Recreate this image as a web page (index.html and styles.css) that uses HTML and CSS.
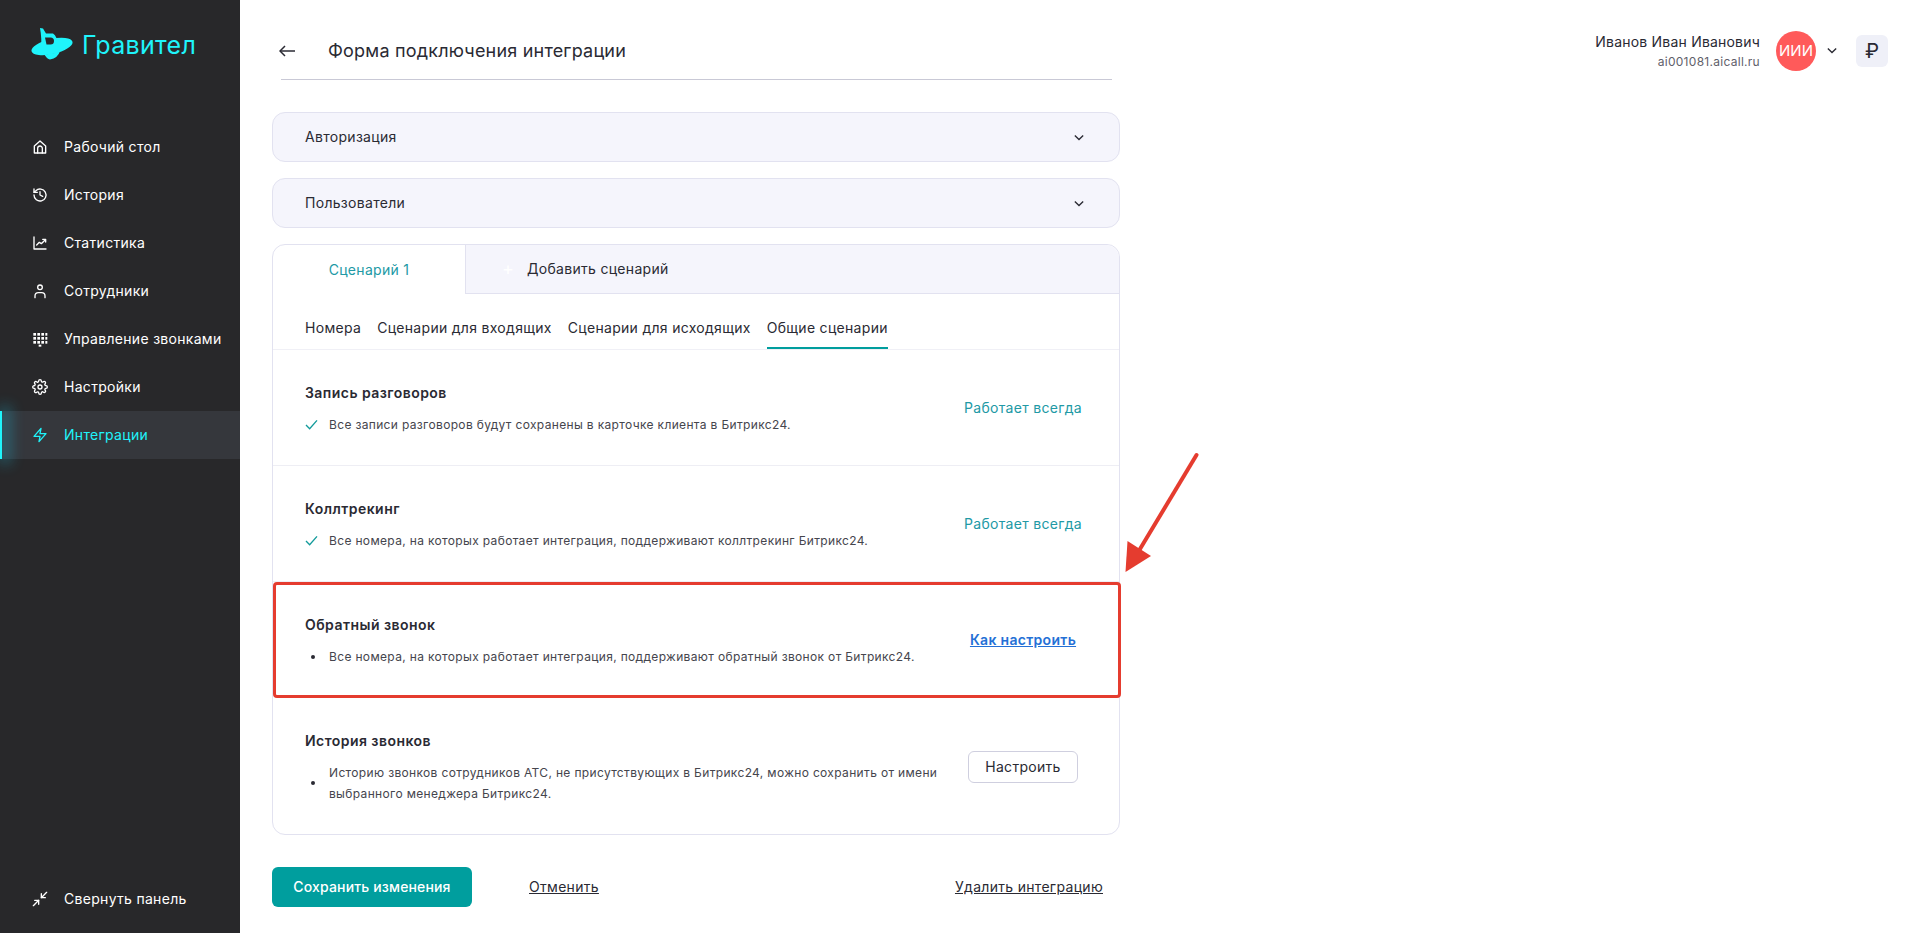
FILE: index.html

```html
<!DOCTYPE html>
<html lang="ru">
<head>
  <meta charset="UTF-8">
  <title>Форма подключения интеграции</title>
  <link rel="stylesheet" href="styles.css">
</head>
<body>
<div class="page">
  <aside class="sidebar">
    <div class="logo">
      <svg class="logo-mark" viewBox="30 25 44 35" width="44" height="35">
        <ellipse cx="52" cy="45.500" rx="21" ry="7.500" transform="rotate(-13 52 45.500)" fill="#1ff4fb"/>
        <path d="M40 27 L43 27.500 L46 32.500 L53 32.500 Q57.500 35 57 44 L41 47 Q42 38 40 27 Z" fill="#1ff4fb"/>
        <path d="M45 36.500 H50.500 a3.500 3.500 0 0 1 0 7 H46.500 Z" fill="#28282a"/>
        <path d="M44 53 Q52 54 60 50 Q58 57 50 58.500 Q47 58 44 53 Z" fill="#1ff4fb"/>
      </svg>
      <span class="logo-text">Гравител</span>
    </div>
    <nav class="nav">
      <a class="nav-item">
        <svg class="icon" viewBox="0 0 24 24"><path d="M3.5 10.5 12 3l8.5 7.5V21h-17z"/><path d="M8.5 21v-7a3.5 3.5 0 0 1 7 0v7"/></svg>
        <span>Рабочий стол</span>
      </a>
      <a class="nav-item">
        <svg class="icon" viewBox="0 0 24 24"><path d="M3 12a9 9 0 1 0 2.8-6.5L3 8"/><path d="M3 3v5h5"/><path d="M12 7v5l4 2"/></svg>
        <span>История</span>
      </a>
      <a class="nav-item">
        <svg class="icon" viewBox="0 0 24 24"><path d="M3 3v18h18"/><path d="M7 15l4-4 3 2 6-6"/><path d="M16 6.5h4.500v4"/></svg>
        <span>Статистика</span>
      </a>
      <a class="nav-item">
        <svg class="icon" viewBox="0 0 24 24"><circle cx="12" cy="6.500" r="3.500"/><path d="M4.500 22v-2.500a5 5 0 0 1 5-5h5a5 5 0 0 1 5 5V22"/></svg>
        <span>Сотрудники</span>
      </a>
      <a class="nav-item">
        <svg class="icon icon-fill" viewBox="0 0 24 24">
          <rect x="2" y="3" width="4" height="4"/><rect x="8" y="3" width="4" height="4"/><rect x="14" y="3" width="4" height="4"/><rect x="20" y="3" width="3" height="4"/>
          <rect x="2" y="9" width="4" height="4"/><rect x="8" y="9" width="4" height="4"/><rect x="14" y="9" width="4" height="4"/><rect x="20" y="9" width="3" height="4"/>
          <rect x="2" y="15" width="4" height="4"/><rect x="8" y="15" width="4" height="4"/><rect x="14" y="15" width="4" height="4"/><rect x="20" y="15" width="3" height="4"/>
          <rect x="10" y="20.500" width="4" height="3"/>
        </svg>
        <span>Управление звонками</span>
      </a>
      <a class="nav-item">
        <svg class="icon" viewBox="0 0 24 24"><circle cx="12" cy="12" r="3"/><path d="M19.4 15a1.65 1.65 0 0 0 .33 1.82l.06.06a2 2 0 0 1 0 2.83 2 2 0 0 1-2.83 0l-.06-.06a1.65 1.65 0 0 0-1.82-.33 1.65 1.65 0 0 0-1 1.51V21a2 2 0 0 1-2 2 2 2 0 0 1-2-2v-.09A1.65 1.65 0 0 0 9 19.4a1.65 1.65 0 0 0-1.82.33l-.06.06a2 2 0 0 1-2.83 0 2 2 0 0 1 0-2.83l.06-.06a1.65 1.65 0 0 0 .33-1.82 1.65 1.65 0 0 0-1.51-1H3a2 2 0 0 1-2-2 2 2 0 0 1 2-2h.09A1.65 1.65 0 0 0 4.6 9a1.65 1.65 0 0 0-.33-1.82l-.06-.06a2 2 0 0 1 0-2.83 2 2 0 0 1 2.83 0l.06.06a1.65 1.65 0 0 0 1.82.33H9a1.65 1.65 0 0 0 1-1.51V3a2 2 0 0 1 2-2 2 2 0 0 1 2 2v.09a1.65 1.65 0 0 0 1 1.51 1.65 1.65 0 0 0 1.82-.33l.06-.06a2 2 0 0 1 2.83 0 2 2 0 0 1 0 2.83l-.06.06a1.65 1.65 0 0 0-.33 1.82V9a1.65 1.65 0 0 0 1.51 1H21a2 2 0 0 1 2 2 2 2 0 0 1-2 2h-.09a1.65 1.65 0 0 0-1.51 1z"/></svg>
        <span>Настройки</span>
      </a>
      <a class="nav-item active">
        <svg class="icon" viewBox="0 0 24 24"><path d="M13.500 2 3 14h9l-1.500 8L21 10h-9l1.500-8z"/></svg>
        <span>Интеграции</span>
      </a>
    </nav>
    <a class="nav-item collapse">
      <svg class="icon" viewBox="0 0 24 24"><path d="M22 2l-8 8"/><path d="M14 4v6h6"/><path d="M2 22l8-8"/><path d="M4 14h6v6"/></svg>
      <span>Свернуть панель</span>
    </a>
  </aside>

  <main class="main">
    <div class="content">
      <header class="form-head">
        <svg class="back" viewBox="0 0 16 12" width="16" height="12"><path d="M16 6H1"/><path d="M6 1 1 6l5 5"/></svg>
        <h1>Форма подключения интеграции</h1>
      </header>

      <div class="accordion">
        <span>Авторизация</span>
        <svg class="chevron" viewBox="0 0 12 8" width="10" height="7"><path d="M1 1.500 6 6.500l5-5"/></svg>
      </div>
      <div class="accordion">
        <span>Пользователи</span>
        <svg class="chevron" viewBox="0 0 12 8" width="10" height="7"><path d="M1 1.500 6 6.500l5-5"/></svg>
      </div>

      <section class="card">
        <div class="tabs">
          <div class="tab tab-current">Сценарий 1</div>
          <div class="tab tab-add"><span class="plus">+</span>Добавить сценарий</div>
        </div>
        <div class="subtabs">
          <a>Номера</a>
          <a>Сценарии для входящих</a>
          <a>Сценарии для исходящих</a>
          <a class="current">Общие сценарии</a>
        </div>

        <div class="row">
          <div class="row-text">
            <h3>Запись разговоров</h3>
            <div class="desc">
              <svg class="check" viewBox="0 0 14 12" width="13" height="11"><path d="M1 6.500 5 10.500 13 1.500"/></svg>
              <p>Все записи разговоров будут сохранены в карточке клиента в Битрикс24.</p>
            </div>
          </div>
          <div class="row-side always">Работает всегда</div>
        </div>

        <div class="row">
          <div class="row-text">
            <h3>Коллтрекинг</h3>
            <div class="desc">
              <svg class="check" viewBox="0 0 14 12" width="13" height="11"><path d="M1 6.500 5 10.500 13 1.500"/></svg>
              <p>Все номера, на которых работает интеграция, поддерживают коллтрекинг Битрикс24.</p>
            </div>
          </div>
          <div class="row-side always">Работает всегда</div>
        </div>

        <div class="row row-marked">
          <div class="row-text">
            <h3>Обратный звонок</h3>
            <div class="desc">
              <span class="bullet"></span>
              <p>Все номера, на которых работает интеграция, поддерживают обратный звонок от Битрикс24.</p>
            </div>
          </div>
          <div class="row-side"><a class="how">Как настроить</a></div>
        </div>

        <div class="row row-last">
          <div class="row-text">
            <h3>История звонков</h3>
            <div class="desc">
              <span class="bullet"></span>
              <p>Историю звонков сотрудников АТС, не присутствующих в Битрикс24, можно сохранить от имени выбранного менеджера Битрикс24.</p>
            </div>
          </div>
          <div class="row-side"><button class="btn-outline">Настроить</button></div>
        </div>
      </section>

      <div class="actions">
        <button class="btn-save">Сохранить изменения</button>
        <a class="link cancel">Отменить</a>
        <a class="link remove">Удалить интеграцию</a>
      </div>
    </div>

    <div class="user">
      <div class="user-text">
        <div class="user-name">Иванов Иван Иванович</div>
        <div class="user-host">ai001081.aicall.ru</div>
      </div>
      <div class="avatar">ИИИ</div>
      <svg class="chevron user-chevron" viewBox="0 0 12 8" width="10" height="7"><path d="M1 1.500 6 6.500l5-5"/></svg>
      <div class="currency">₽</div>
    </div>
  </main>
</div>

<svg class="pointer" viewBox="0 0 85 130" width="85" height="130">
  <path d="M76.500 4 L14 108" class="pointer-line"/>
  <path d="M5.500 121 L7.500 90 L31 105 Z" class="pointer-head"/>
</svg>
</body>
</html>
```

FILE: styles.css

```css
* {
  box-sizing: border-box;
}

body {
  margin: 0;
  font-family: Inter, "Noto Sans", sans-serif;
  font-size: 14px;
  line-height: 20px;
  letter-spacing: 0.3px;
  color: #2a2a33;
  background: #fff;
}

.page {
  display: flex;
  height: 933px;
  overflow: hidden;
}

/* sidebar */
.sidebar {
  width: 240px;
  flex-shrink: 0;
  display: flex;
  flex-direction: column;
  background: #28282a;
  color: #fff;
}

.logo {
  height: 123px;
  padding: 26px 0 0 30px;
  display: flex;
  align-items: flex-start;
  gap: 8px;
}

.logo-text {
  font-size: 25px;
  line-height: 38px;
  color: #1ff4fb;
}

.nav-item {
  height: 48px;
  padding-left: 32px;
  display: flex;
  align-items: center;
  gap: 16px;
}

.nav-item.active {
  position: relative;
  background: #35373c;
  color: #1ff4fb;
}

.nav-item.active::before {
  content: "";
  position: absolute;
  left: 0;
  top: 0;
  bottom: 0;
  width: 2px;
  background: #1ff4fb;
  box-shadow: 4px 0 14px 5px rgba(31, 200, 235, 0.32);
}

.collapse {
  margin-top: auto;
  margin-bottom: 10px;
}

.icon {
  width: 16px;
  height: 16px;
  flex-shrink: 0;
  fill: none;
  stroke: currentColor;
  stroke-width: 2;
  stroke-linecap: round;
  stroke-linejoin: round;
}

.icon-fill {
  fill: currentColor;
  stroke: none;
}

/* form */
.main {
  flex: 1;
  display: flex;
  padding-left: 32px;
}

.content {
  width: 848px;
}

.form-head {
  height: 80px;
  margin: 0 8px 0 9px;
  padding-top: 39px;
  display: flex;
  align-items: flex-start;
  border-bottom: 1px solid #c9c9d6;
}

.form-head h1 {
  margin: 0;
  font-size: 18px;
  line-height: 24px;
  font-weight: 400;
  letter-spacing: 0.2px;
}

.back {
  margin: 6px 33px 0 -2px;
  fill: none;
  stroke: #2a2a33;
  stroke-width: 1.5;
}

.accordion {
  height: 50px;
  margin-top: 32px;
  padding: 0 35px 0 32px;
  display: flex;
  align-items: center;
  justify-content: space-between;
  background: #f5f5fc;
  border: 1px solid #e2e2f0;
  border-radius: 13px;
}

.accordion + .accordion {
  margin-top: 16px;
}

.chevron {
  fill: none;
  stroke: #2a2a33;
  stroke-width: 1.6;
}

.card {
  margin-top: 16px;
  height: 591px;
  border: 1px solid #e2e2f0;
  border-radius: 13px;
}

.tabs {
  height: 49px;
  display: flex;
}

.tab {
  display: flex;
  align-items: center;
}

.tab-current {
  width: 193px;
  justify-content: center;
  color: #2199a5;
  border-right: 1px solid #e2e2f0;
}

.tab-add {
  flex: 1;
  padding-left: 36px;
  background: #f5f5fc;
  border-bottom: 1px solid #e2e2f0;
  border-top-right-radius: 13px;
}

.plus {
  width: 25px;
  color: #fff;
  font-size: 18px;
}

.subtabs {
  height: 56px;
  padding: 24px 0 0 32px;
  display: flex;
  gap: 16px;
  border-bottom: 1px solid #f0f0f6;
}

.subtabs a {
  height: 31px;
}

.subtabs a.current {
  border-bottom: 2px solid #009e9e;
}

.row {
  height: 116px;
  padding: 33px 36px 0 32px;
  display: flex;
  justify-content: space-between;
  border-bottom: 1px solid #eeeef4;
}

.row-marked {
  position: relative;
  border-bottom: none;
}

/* red frame from the annotated screenshot */
.row-marked::after {
  content: "";
  position: absolute;
  inset: 0 -2px 0 0;
  border: 3px solid #e53c2f;
  border-radius: 4px;
}

.row-last {
  height: 137px;
  border-bottom: none;
}

.row-text h3 {
  margin: 0 0 11px;
  font-size: 14px;
  line-height: 20px;
  font-weight: 600;
  letter-spacing: 0.45px;
}

.desc {
  display: flex;
  align-items: center;
  width: 640px;
  font-size: 12px;
  line-height: 21px;
  letter-spacing: 0.34px;
  color: #45454d;
}

.desc p {
  margin: 0;
  flex: 1;
}

.check {
  margin-right: 11px;
  fill: none;
  stroke: #139b9b;
  stroke-width: 1.5;
}

.bullet {
  width: 4px;
  height: 4px;
  margin: 0 14px 0 6px;
  border-radius: 50%;
  background: #2a2a33;
}

.row-side {
  width: 120px;
  display: flex;
  justify-content: center;
  align-items: center;
  align-self: stretch;
  margin-top: -33px;
  white-space: nowrap;
}

.always {
  color: #2199a5;
}

.how {
  color: #2470d6;
  font-weight: 600;
  text-decoration: underline;
}

.btn-outline {
  width: 110px;
  height: 32px;
  background: #fff;
  border: 1px solid #cfcfdf;
  border-radius: 6px;
  font: inherit;
  letter-spacing: inherit;
  color: #2a2a33;
}

.actions {
  margin-top: 32px;
  display: flex;
  align-items: center;
}

.btn-save {
  width: 200px;
  height: 40px;
  background: #009e9e;
  border: none;
  border-radius: 6px;
  color: #fff;
  font: inherit;
  font-weight: 500;
  letter-spacing: 0.15px;
}

.link {
  color: #2a2a33;
  text-decoration: underline;
}

.cancel {
  margin-left: 57px;
}

.remove {
  margin-left: auto;
  margin-right: 17px;
}

/* user block */
.user {
  margin-left: auto;
  height: 102px;
  padding: 31px 23px 0 0;
  display: flex;
  align-items: flex-start;
}

.user-text {
  text-align: right;
  margin-right: 16px;
}

.user-name {
  line-height: 22px;
  letter-spacing: 0.2px;
}

.user-host {
  font-size: 12px;
  line-height: 18px;
  letter-spacing: 0.28px;
  color: #5f5f6b;
}

.avatar {
  width: 40px;
  height: 40px;
  border-radius: 50%;
  background: #ff5a5a;
  color: #fff;
  font-size: 15px;
  line-height: 40px;
  letter-spacing: 0;
  text-align: center;
}

.user-chevron {
  margin: 16px 19px 0 11px;
}

.currency {
  width: 32px;
  height: 32px;
  margin-top: 4px;
  background: #eff0f8;
  border-radius: 6px;
  font-size: 20px;
  line-height: 32px;
  letter-spacing: 0;
  text-align: center;
}

/* arrow from the annotated screenshot */
.pointer {
  position: absolute;
  left: 1120px;
  top: 451px;
}

.pointer-line {
  fill: none;
  stroke: #e53c2f;
  stroke-width: 4;
  stroke-linecap: round;
}

.pointer-head {
  fill: #e53c2f;
}
```
